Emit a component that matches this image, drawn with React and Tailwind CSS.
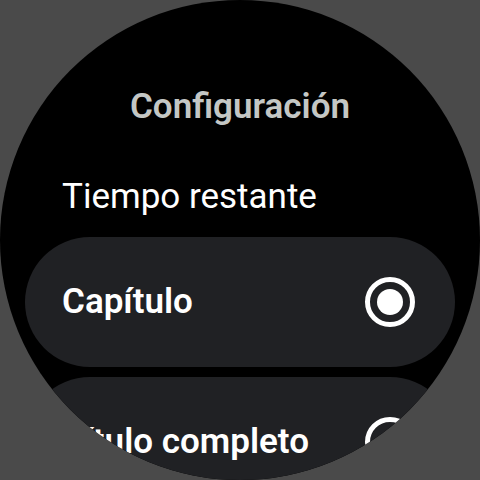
import React from 'react';

const font = { fontFamily: 'Roboto, "Noto Sans", sans-serif' };

const Radio = ({ checked }) => (
  <div className="w-[50px] h-[50px] rounded-full border-[5px] border-white flex items-center justify-center shrink-0">
    {checked && <div className="w-[26px] h-[26px] rounded-full bg-white" />}
  </div>
);

const Chip = ({ label, checked }) => (
  <div className="ml-[25px] w-[430px] h-[130px] shrink-0 rounded-full bg-[#202124] flex items-center justify-between pl-[37px] pr-[40px]">
    <span className="text-[35px] leading-[40px] font-semibold text-white whitespace-nowrap">{label}</span>
    <Radio checked={checked} />
  </div>
);

export default function App() {
  return (
    <div className="w-[480px] h-[480px] bg-[#4a4a4a] overflow-hidden" style={font}>
      <div className="w-[480px] h-[480px] rounded-full bg-black overflow-hidden flex flex-col">
        <div className="pt-[87px] text-center text-[35px] leading-[40px] font-semibold text-[#c4c7c5]">
          Configuración
        </div>
        <div className="mt-[50px] pl-[62px] text-[35px] leading-[40px] text-white">
          Tiempo restante
        </div>
        <div className="mt-[20px] flex flex-col gap-[10px]">
          <Chip label="Capítulo" checked />
          <Chip label="Título completo" />
        </div>
      </div>
    </div>
  );
}
